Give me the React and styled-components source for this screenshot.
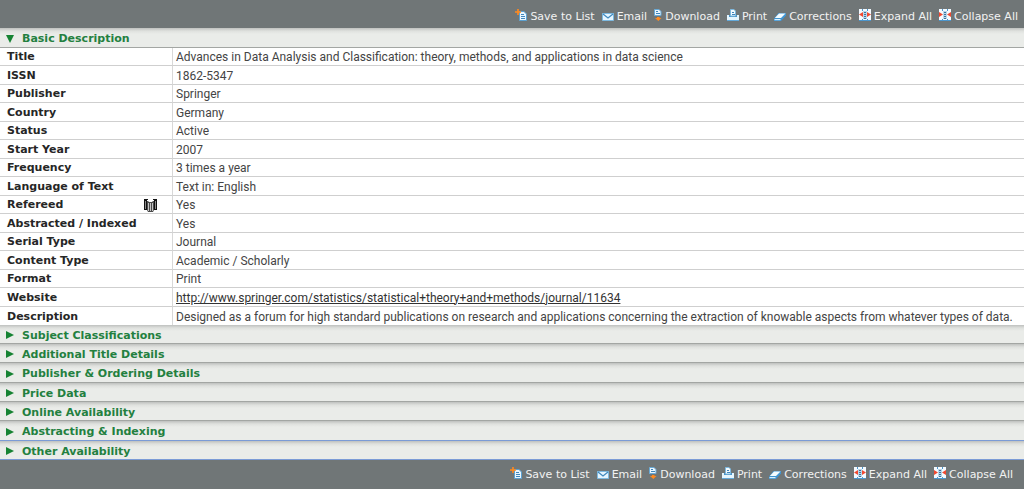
import React, { useState } from 'react';
import styled, { createGlobalStyle } from 'styled-components';

const GlobalStyle = createGlobalStyle`
    body {
        margin: 0;
        background: #ffffff;
        font-family: Verdana, "DejaVu Sans", sans-serif;
        font-size: 11px;
        color: #444444;
    }
`;

const Toolbar = styled.div`
    display: flex;
    flex-wrap: wrap;
    align-items: center;
    justify-content: flex-end;
    gap: 7px;
    box-sizing: border-box;
    min-height: ${props => props.$bottom ? '29px' : '28px'};
    padding: ${props => props.$bottom ? '0 11px 0 0' : '6px 6px 0 0'};
    background: #707677;
`;

const ToolButton = styled.button`
    display: flex;
    align-items: center;
    gap: 3px;
    padding: 0;
    border: 0;
    background: none;
    color: #f2f2f2;
    font: inherit;
    line-height: 16px;
    cursor: pointer;

    svg {
        flex: none;
        margin-bottom: ${props => props.$raised ? '4px' : '0'};
    }
`;

const SectionHeader = styled.button`
    display: flex;
    align-items: center;
    gap: 8px;
    box-sizing: border-box;
    width: 100%;
    height: ${props => props.$tall ? '20px' : '19px'};
    padding: 2px 6px 0;
    border: 0;
    border-bottom: 1px solid ${props => props.$blue ? '#7b9bd6' : '#a3a6a3'};
    background: linear-gradient(#bfc1bf, #dfe1de 3px, #eaece9 6px);
    color: #23803f;
    font: inherit;
    font-weight: bold;
    text-align: left;
    cursor: pointer;
`;

const Details = styled.table`
    width: 100%;
    border-collapse: separate;
    border-spacing: 0;
`;

const Row = styled.tr`
    height: 18px;

    &:nth-child(even) {
        height: 19px;
    }

    &:not(:last-child) > * {
        border-bottom: 1px solid #cfcfcf;
    }
`;

const Label = styled.th`
    box-sizing: border-box;
    width: 173px;
    padding: 1px 15px 0 7px;
    border-right: 1px solid #d8d8d8;
    color: #262626;
    line-height: 16px;
    text-align: left;
`;

const LabelContent = styled.div`
    display: flex;
    align-items: center;
    justify-content: space-between;
`;

const Value = styled.td`
    padding: 1px 3px 0;
    font-family: Roboto, sans-serif;
    font-size: 12px;
    line-height: 16px;
`;

const Link = styled.a`
    color: #333333;
    text-decoration: underline;
`;

const SaveIcon = () => (
    <svg width="12" height="12" viewBox="0 0 12 12" aria-hidden="true">
        <path d="M4.500 2.500h4.500l2.500 2.500v6.500h-7z" fill="#e9f6ff" stroke="#5ba0d0" />
        <path d="M6 5.500h3M6 7.500h4M6 9.500h4" stroke="#3f86bd" />
        <path d="M3 0v6M0 3h6" stroke="#ff8a1e" strokeWidth="1.6" />
    </svg>
);

const EmailIcon = () => (
    <svg width="12" height="8" viewBox="0 0 12 8" aria-hidden="true">
        <path d="M.5.5h11v7H.5z" fill="#e5f5ff" stroke="#7db9e0" />
        <path d="M1 1l5 4 5-4" fill="none" stroke="#4189be" strokeWidth="1.3" />
    </svg>
);

const DownloadIcon = () => (
    <svg width="8" height="12" viewBox="0 0 8 12" aria-hidden="true">
        <path d="M.5.5h4.500l2 2v4H.5z" fill="#e9f6ff" stroke="#68a9d5" />
        <path d="M2 2.500h2M2 4.500h4" stroke="#3f86bd" />
        <path d="M3 8h2.500v1h2L4.300 12 1 9h2z" fill="#ff8a1e" />
    </svg>
);

const PrintIcon = () => (
    <svg width="12" height="12" viewBox="0 0 12 12" aria-hidden="true">
        <path d="M0 6h12v6H0z" fill="#63a9da" />
        <path d="M0 6h12v5H0z" fill="#e5f6ff" />
        <path d="M2 6h8v2H2z" fill="#4a94c9" />
        <path d="M3.500.5h3.500l1.500 1.500v5h-5z" fill="#f3fbff" stroke="#7db9e0" />
        <path d="M5 3.500h2M5 5.500h3" stroke="#3f86bd" />
    </svg>
);

const EraserIcon = () => (
    <svg width="12" height="8" viewBox="0 0 12 8" aria-hidden="true">
        <path d="M4.500 0H12v2.500L7 8H0V5.500z" fill="#3f94d2" />
        <path d="M5 .5h6.500L7 5H.8z" fill="#f5fcff" />
        <path d="M.5 6h6v1.200h-6z" fill="#d8f0ff" />
    </svg>
);

const ColumnsIcon = ({ collapse }) => (
    <svg width="12" height="12" viewBox="0 0 12 12" aria-hidden="true">
        <path d="M0 0h12v12H0z" fill="#f4faff" />
        <path d="M3 0h1v2H3zM8 0h1v2H8zM3 10h1v2H3zM8 10h1v2H8zM0 11h12v1H0z" fill="#4b96ce" />
        <path d="M4 2h4v8H4z" fill="#b9d6ea" />
        <path d="M5 3.500h2M5 5.500h2M5 7.500h2M5 9.500h2" stroke="#39749f" />
        <path
            d={collapse
                ? 'M0 3l4 2.500L0 8zM12 3L8 5.500 12 8z'
                : 'M4 3L0 5.500 4 8zM8 3l4 2.500L8 8z'}
            fill="#f04a32"
        />
    </svg>
);

const RefereedIcon = () => (
    <svg width="13" height="13" viewBox="0 0 13 13" role="img" aria-label="Refereed">
        <path d="M0 0h4v1H3v10H0zM9 0h4v11h-3V1H9z" fill="#111111" />
        <path d="M3 2h1l1 1h3l1-1h1v9l-1 2H4l-1-2z" fill="#4a4a4a" />
        <path d="M1.500 2v8M11.500 2v8" stroke="#8a8a8a" />
        <path d="M4.500 4v8M6.500 4v8M8.500 4v8" stroke="#c4c4c4" />
    </svg>
);

const Arrow = ({ open }) => (
    <svg width="8" height="8" viewBox="0 0 8 8" aria-hidden="true">
        <path d={open ? 'M0 0h8L4 8z' : 'M0 0l8 4-8 4z'} fill="#168333" />
    </svg>
);

const tools = [
    { name: 'Save to List', icon: <SaveIcon />, raised: true },
    { name: 'Email', icon: <EmailIcon /> },
    { name: 'Download', icon: <DownloadIcon />, raised: true },
    { name: 'Print', icon: <PrintIcon />, raised: true },
    { name: 'Corrections', icon: <EraserIcon /> },
    { name: 'Expand All', icon: <ColumnsIcon />, raised: true },
    { name: 'Collapse All', icon: <ColumnsIcon collapse />, raised: true },
];

const details = [
    ['Title', 'Advances in Data Analysis and Classification: theory, methods, and applications in data science'],
    ['ISSN', '1862-5347'],
    ['Publisher', 'Springer'],
    ['Country', 'Germany'],
    ['Status', 'Active'],
    ['Start Year', '2007'],
    ['Frequency', '3 times a year'],
    ['Language of Text', 'Text in: English'],
    ['Refereed', 'Yes'],
    ['Abstracted / Indexed', 'Yes'],
    ['Serial Type', 'Journal'],
    ['Content Type', 'Academic / Scholarly'],
    ['Format', 'Print'],
    ['Website', 'http://www.springer.com/statistics/statistical+theory+and+methods/journal/11634'],
    ['Description', 'Designed as a forum for high standard publications on research and applications concerning the extraction of knowable aspects from whatever types of data.'],
];

const sections = [
    { name: 'Subject Classifications' },
    { name: 'Additional Title Details' },
    { name: 'Publisher & Ordering Details', tall: true },
    { name: 'Price Data' },
    { name: 'Online Availability' },
    { name: 'Abstracting & Indexing', tall: true, blue: true },
    { name: 'Other Availability', blue: true },
];

const Tools = ({ bottom, onToggle }) => (
    <Toolbar $bottom={bottom}>
        {tools.map(tool => (
            <ToolButton
                key={tool.name}
                type="button"
                $raised={tool.raised}
                onClick={() => {
                    if (tool.name === 'Expand All') onToggle(true);
                    if (tool.name === 'Collapse All') onToggle(false);
                }}
            >
                {tool.icon}
                {tool.name}
            </ToolButton>
        ))}
    </Toolbar>
);

const App = () => {
    const [open, setOpen] = useState(true);

    return (
        <main>
            <GlobalStyle />
            <Tools onToggle={setOpen} />
            <SectionHeader type="button" $tall aria-expanded={open} onClick={() => setOpen(!open)}>
                <Arrow open={open} />
                Basic Description
            </SectionHeader>
            {open && (
                <Details>
                    <tbody>
                        {details.map(([label, value]) => (
                            <Row key={label}>
                                <Label scope="row">
                                    <LabelContent>
                                        {label}
                                        {label === 'Refereed' && <RefereedIcon />}
                                    </LabelContent>
                                </Label>
                                <Value>
                                    {label === 'Website' ? <Link href={value}>{value}</Link> : value}
                                </Value>
                            </Row>
                        ))}
                    </tbody>
                </Details>
            )}
            {sections.map(section => (
                <SectionHeader key={section.name} type="button" $tall={section.tall} $blue={section.blue}>
                    <Arrow />
                    {section.name}
                </SectionHeader>
            ))}
            <Tools bottom onToggle={setOpen} />
        </main>
    );
};

export default App;
